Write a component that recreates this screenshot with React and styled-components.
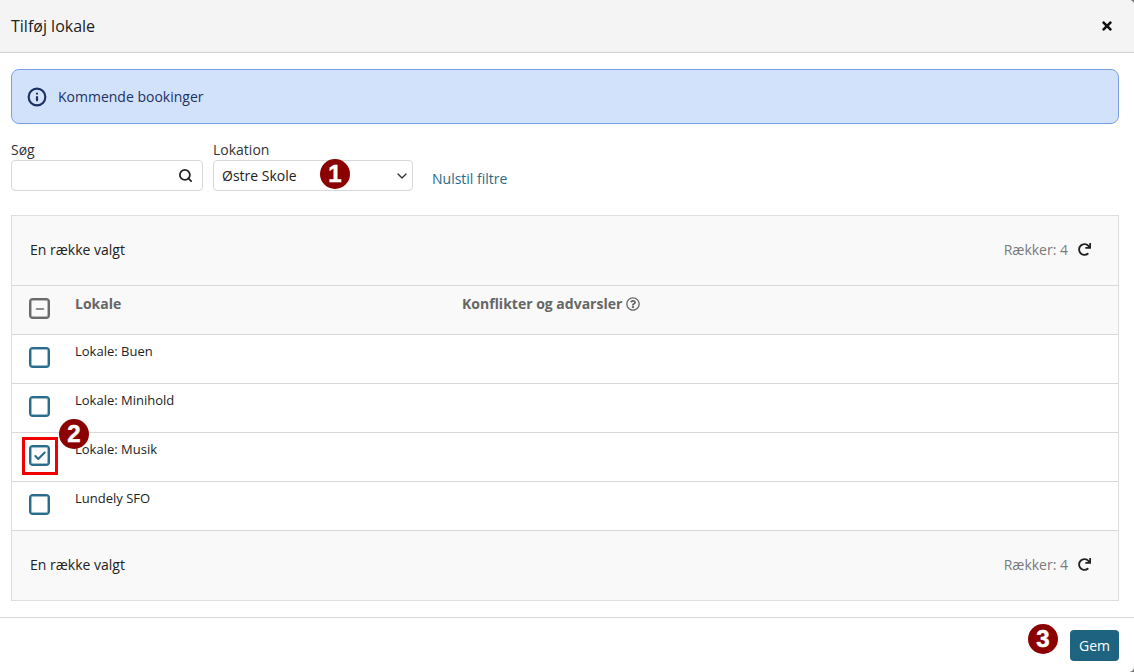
import styled, { createGlobalStyle } from "styled-components";
import { ChevronDown, Check, Minus, Info, Search } from "lucide-react";
import { FaTimes, FaRedo, FaRegQuestionCircle } from "react-icons/fa";

const GlobalStyle = createGlobalStyle`
  html, body {
    margin: 0;
    padding: 0;
    background: #777;
  }
  body {
    font-family: "Open Sans", "Noto Sans", sans-serif;
    color: #212121;
  }
`;

const Modal = styled.div`
  width: 1134px;
  height: 672px;
  display: flex;
  flex-direction: column;
  position: relative;
  overflow: hidden;
  background: #fff;
  border-radius: 0 5px 5px 0;
`;

const Header = styled.header`
  height: 52px;
  flex: none;
  display: flex;
  align-items: center;
  justify-content: space-between;
  padding: 0 20px 0 11px;
  background: #f4f4f4;
  border-bottom: 1px solid #d3d3d3;
`;

const Title = styled.h1`
  margin: 0;
  font-size: 16px;
  font-weight: 400;
  color: #222;
`;

const CloseButton = styled.button`
  width: 14px;
  height: 14px;
  padding: 0;
  border: none;
  background: none;
  display: flex;
  align-items: center;
  justify-content: center;
  color: #111;
`;

const Body = styled.main`
  flex: none;
  display: flex;
  flex-direction: column;
  padding: 16px 15px 0 11px;
`;

const Alert = styled.div`
  height: 55px;
  box-sizing: border-box;
  display: flex;
  align-items: center;
  gap: 11px;
  padding: 0 15px;
  border: 1px solid #7c9fe3;
  border-radius: 8px;
  background: #d3e2fb;
  color: #1c3263;
  font-size: 14px;
`;

const Filters = styled.div`
  display: flex;
  align-items: flex-end;
  margin-top: 16px;
`;

const Field = styled.div`
  width: ${(p) => p.$width}px;
  margin-right: 10px;
  display: flex;
  flex-direction: column;
`;

const Label = styled.label`
  font-size: 14px;
  line-height: 20px;
  color: #333;
`;

const Control = styled.div`
  height: 31px;
  box-sizing: border-box;
  display: flex;
  align-items: center;
  justify-content: space-between;
  padding: 0 ${(p) => (p.$select ? 2 : 9)}px 0 8px;
  border: 1px solid #d8d8d8;
  border-radius: 4px;
  background: #fff;
  font-size: 14px;
  color: #222;
`;

const ResetLink = styled.a`
  margin-left: 9px;
  height: 24px;
  line-height: 24px;
  font-size: 14px;
  color: #286b8a;
`;

const Table = styled.section`
  margin-top: 24px;
  height: 386px;
  box-sizing: border-box;
  border: 1px solid #dedede;
  display: flex;
  flex-direction: column;
`;

const Toolbar = styled.div`
  height: ${(p) => (p.$bottom ? 70 : 69)}px;
  flex: none;
  box-sizing: border-box;
  display: flex;
  align-items: center;
  justify-content: space-between;
  padding: 0 27px 2px 18px;
  border-top: ${(p) => (p.$bottom ? "1px solid #d8d8d8" : "none")};
  background: #f9f9f9;
  font-size: 14px;
  color: #222;
`;

const RowCount = styled.div`
  display: flex;
  align-items: center;
  gap: 10px;
  color: #7a7a7a;
  svg {
    color: #222;
  }
`;

const Row = styled.div`
  height: 49px;
  flex: none;
  box-sizing: border-box;
  display: grid;
  grid-template-columns: 63px 387px 1fr;
  border-top: 1px solid #d8d8d8;
  background: ${(p) => (p.$head ? "#f9f9f9" : "#fff")};
  font-size: 13px;
  color: #222;
`;

const CheckCell = styled.div`
  padding: 12px 0 0 17px;
`;

const TextCell = styled.div`
  padding-top: 7px;
  line-height: 18px;
`;

const HeadCell = styled.div`
  padding-top: 8px;
  display: flex;
  align-items: flex-start;
  gap: 4px;
  font-size: 14px;
  line-height: 20px;
  font-weight: 700;
  color: #666;
  svg {
    margin-top: 3px;
  }
`;

const Box = styled.span`
  --tick: ${(p) => (p.$grey ? "#6a6a6a" : "#296c8b")};
  width: 21px;
  height: 21px;
  box-sizing: border-box;
  display: flex;
  align-items: center;
  justify-content: center;
  border: 2px solid var(--tick);
  border-radius: 4px;
  box-shadow: inset 0 0 0 1px color-mix(in srgb, var(--tick) 45%, transparent);
  color: var(--tick);
`;

const ModalFooter = styled.footer`
  margin-top: 16px;
  flex: 1;
  display: flex;
  align-items: flex-start;
  justify-content: flex-end;
  padding: 12px 15px 0 0;
  border-top: 1px solid #d8d8d8;
`;

const SaveButton = styled.button`
  width: 49px;
  height: 31px;
  padding: 0;
  border: none;
  border-radius: 4px;
  background: #1e6480;
  color: #fff;
  font-family: inherit;
  font-size: 14px;
`;

const Badge = styled.span`
  position: absolute;
  left: ${(p) => p.$x}px;
  top: ${(p) => p.$y}px;
  width: 30px;
  height: 30px;
  border-radius: 50%;
  background: #8b0000;
  color: #fff;
  display: flex;
  align-items: center;
  justify-content: center;
  font-family: "Liberation Sans", Arial, sans-serif;
  font-size: 24px;
  font-weight: 700;
  -webkit-text-stroke: 0.5px #fff;
`;

const Highlight = styled.span`
  position: absolute;
  left: 22px;
  top: 437px;
  width: 36px;
  height: 38px;
  box-sizing: border-box;
  border: 3px solid #f00000;
`;

const rows = [
  { name: "Lokale: Buen" },
  { name: "Lokale: Minihold" },
  { name: "Lokale: Musik", checked: true },
  { name: "Lundely SFO" },
];

function Count() {
  return (
    <RowCount>
      Rækker: 4
      <FaRedo size={13} />
    </RowCount>
  );
}

export default function App() {
  return (
    <>
      <GlobalStyle />
      <Modal>
        <Header>
          <Title>Tilføj lokale</Title>
          <CloseButton aria-label="Luk">
            <FaTimes size={14} />
          </CloseButton>
        </Header>
        <Body>
          <Alert>
            <Info size={20} strokeWidth={2.6} />
            Kommende bookinger
          </Alert>
          <Filters>
            <Field $width={192}>
              <Label>Søg</Label>
              <Control>
                <span />
                <Search size={15} strokeWidth={2.8} color="#222" />
              </Control>
            </Field>
            <Field $width={200}>
              <Label>Lokation</Label>
              <Control $select>
                Østre Skole
                <ChevronDown size={16} strokeWidth={2} color="#333" />
              </Control>
            </Field>
            <ResetLink>Nulstil filtre</ResetLink>
          </Filters>
          <Table>
            <Toolbar>
              En række valgt
              <Count />
            </Toolbar>
            <Row $head>
              <CheckCell>
                <Box $grey>
                  <Minus size={12} strokeWidth={3.2} />
                </Box>
              </CheckCell>
              <HeadCell>Lokale</HeadCell>
              <HeadCell>
                Konflikter og advarsler
                <FaRegQuestionCircle size={14} />
              </HeadCell>
            </Row>
            {rows.map((row) => (
              <Row key={row.name}>
                <CheckCell>
                  <Box>{row.checked && <Check size={14} strokeWidth={3.6} />}</Box>
                </CheckCell>
                <TextCell>{row.name}</TextCell>
              </Row>
            ))}
            <Toolbar $bottom>
              En række valgt
              <Count />
            </Toolbar>
          </Table>
        </Body>
        <ModalFooter>
          <SaveButton>Gem</SaveButton>
        </ModalFooter>
        <Badge $x={320} $y={159}>1</Badge>
        <Highlight />
        <Badge $x={59} $y={419}>2</Badge>
        <Badge $x={1028} $y={624}>3</Badge>
      </Modal>
    </>
  );
}
